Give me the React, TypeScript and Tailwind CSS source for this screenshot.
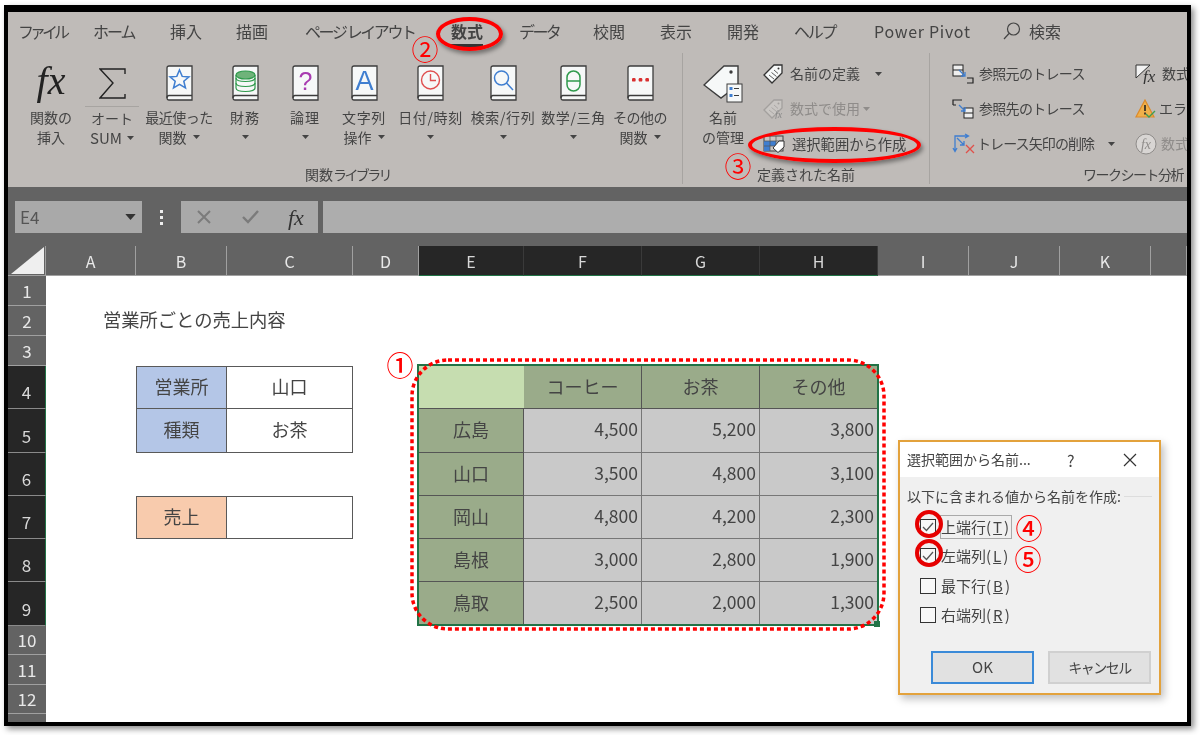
import type { ReactNode } from 'react'

const font = "font-['Noto_Sans_CJK_JP','Noto_Sans',sans-serif]"

const tabs = [
  { label: 'ファイル', w: 'w-[75px]', track: 'tracking-[-4px]' },
  { label: 'ホーム', w: 'w-[77px]', track: 'tracking-[-2px]' },
  { label: '挿入', w: 'w-[66px]', track: '' },
  { label: '描画', w: 'w-[69px]', track: '' },
  { label: 'ページ レイアウト', w: 'w-[146px]', track: 'tracking-[-2.4px]' },
  { label: '数式', w: 'w-[68px]', track: '', active: true },
  { label: 'データ', w: 'w-[74px]', track: 'tracking-[-2.6px]' },
  { label: '校閲', w: 'w-[67px]', track: '' },
  { label: '表示', w: 'w-[67px]', track: '' },
  { label: '開発', w: 'w-[67px]', track: '' },
  { label: 'ヘルプ', w: 'w-[80px]', track: 'tracking-[-2.2px]' },
  { label: 'Power Pivot', w: 'w-[129px]', track: 'tracking-[0.7px]' },
]

function Caret({ className = '' }: { className?: string }) {
  return (
    <svg width="7" height="4" viewBox="0 0 7 4" className={`inline-block ${className}`}>
      <path d="M0 0h7L3.5 4z" fill="currentColor" />
    </svg>
  )
}

function Book({ children }: { children: ReactNode }) {
  return (
    <svg width="27" height="36" viewBox="0 0 27 36">
      <path d="M3 1h23v34H3c-1.2 0-2-.8-2-2V3c0-1.2.8-2 2-2z" fill="#f6f8f8" stroke="#3c3c3c" strokeWidth="1.3" />
      <path d="M1 33c0-1.5.8-2.5 2-2.5h23" fill="none" stroke="#3c3c3c" strokeWidth="1.3" />
      {children}
    </svg>
  )
}

const bookIcons: Record<string, ReactNode> = {
  star: <path d="M13.5 5l2.7 6.4 6.8.5-5.2 4.4 1.7 6.7-6-3.6-6 3.6 1.7-6.7-5.2-4.4 6.8-.5z" fill="none" stroke="#3f7ed0" strokeWidth="1.5" />,
  db: (
    <g fill="#6fb37a" stroke="#2f9a4c" strokeWidth="1.2">
      <path d="M4 18v5c0 2 4 3.5 9.5 3.5S23 25 23 23v-5" fill="none" />
      <path d="M4 13v5c0 2 4 3.5 9.5 3.5S23 20 23 18v-5" fill="none" />
      <path d="M4 13c0 2 4 3.5 9.5 3.5S23 15 23 13" fill="none" />
      <ellipse cx="13.5" cy="10" rx="9.5" ry="4" />
      <path d="M4 10v3M23 10v3" fill="none" />
    </g>
  ),
  question: (
    <text x="13.5" y="25" textAnchor="middle" fontSize="25" fill="#a83bb0" fontFamily="Liberation Sans">?</text>
  ),
  a: (
    <text x="13.5" y="25" textAnchor="middle" fontSize="27" fill="#3f7ed0" fontFamily="Liberation Sans">A</text>
  ),
  clock: (
    <g fill="none" stroke="#df4f4f" strokeWidth="1.4">
      <circle cx="13.5" cy="15" r="9" />
      <path d="M13.5 9v6.5H19" />
    </g>
  ),
  search: (
    <g fill="none" stroke="#3f7ed0" strokeWidth="1.5">
      <circle cx="11.5" cy="13" r="7" />
      <path d="M16.5 18l6.5 7" />
    </g>
  ),
  theta: (
    <g fill="none" stroke="#2f9a4c" strokeWidth="1.5">
      <rect x="7" y="6" width="13" height="20" rx="6.5" />
      <path d="M7 16h13" />
    </g>
  ),
  dots: (
    <g fill="#d92f2f">
      <rect x="5" y="13" width="3.6" height="3.6" rx="1.2" />
      <rect x="11.7" y="13" width="3.6" height="3.6" rx="1.2" />
      <rect x="18.4" y="13" width="3.6" height="3.6" rx="1.2" />
    </g>
  ),
}

const libraryButtons = [
  { w: 'w-[70px]', icon: 'star', lines: ['最近使った', '関数'], track: 'tracking-[-0.5px]' },
  { w: 'w-[62px]', icon: 'db', lines: ['財務', ''], track: 'tracking-[1px]' },
  { w: 'w-[58px]', icon: 'question', lines: ['論理', ''], track: 'tracking-[1px]' },
  { w: 'w-[60px]', icon: 'a', lines: ['文字列', '操作'], track: 'tracking-[0.6px]' },
  { w: 'w-[73px]', icon: 'clock', lines: ['日付/時刻', ''], track: 'tracking-[0.6px]' },
  { w: 'w-[72px]', icon: 'search', lines: ['検索/行列', ''], track: 'tracking-[0.6px]' },
  { w: 'w-[69px]', icon: 'theta', lines: ['数学/三角', ''], track: 'tracking-[0.6px]' },
  { w: 'w-[64px]', icon: 'dots', lines: ['その他の', '関数'], track: 'tracking-[-0.5px]' },
]

function TagIcon() {
  return (
    <svg width="40" height="38" viewBox="0 0 40 38">
      <path d="M1 20L21 1h14v19L18 33z" fill="#f6f8f8" stroke="#3c3c3c" strokeWidth="1.4" />
      <circle cx="28" cy="7" r="1.7" fill="#3c3c3c" />
      <rect x="24" y="19" width="15" height="18" fill="#f6f8f8" stroke="#3c3c3c" />
      <g fill="#3f7ed0">
        <rect x="26.5" y="22" width="3" height="3" />
        <rect x="26.5" y="29" width="3" height="3" />
      </g>
      <path d="M31 23.5h5M31 30.5h5" stroke="#3c3c3c" />
    </svg>
  )
}

function SmallTag({ grey = false }: { grey?: boolean }) {
  const c = grey ? '#a3a09e' : '#333'
  return (
    <svg width="20" height="20" viewBox="0 0 20 20">
      <path d="M1 11L11 1h8v8L9 19z" fill={grey ? '#c9c6c3' : '#f6f8f8'} stroke={c} strokeWidth="1.3" />
      <path d="M6 11l5 4M8.5 8.5l5 4M11 6l4 3.5" stroke={c} strokeWidth="0.8" />
      <circle cx="15.5" cy="4.5" r="1" fill={c} />
      {grey && <text x="12" y="19" fontSize="10" fontStyle="italic" fontFamily="Liberation Serif" fill="#888">fx</text>}
    </svg>
  )
}

function CreateIcon() {
  return (
    <svg width="22" height="18" viewBox="0 0 22 18">
      <rect x="1" y="1" width="19" height="15" fill="#c9c6c3" stroke="#444" />
      <rect x="1" y="6" width="6" height="10" fill="#3f7ed0" />
      <rect x="7" y="6" width="6" height="5" fill="#3f7ed0" />
      <path d="M1 6h19M7 1v15M13 1v15M1 11h12" stroke="#555" strokeWidth="0.7" />
      <path d="M10 13l6-7h5v6l-6 5.5z" fill="#fff" stroke="#333" />
    </svg>
  )
}

function TraceIcon({ kind }: { kind: 'from' | 'to' }) {
  return (
    <svg width="22" height="20" viewBox="0 0 22 20">
      {kind === 'from' ? (
        <>
          <rect x="1" y="1" width="10" height="11" fill="#eee" stroke="#222" />
          <path d="M1 6h10" stroke="#222" />
          <path d="M15 14h6v5h-6" fill="none" stroke="#222" strokeWidth="1.2" />
        </>
      ) : (
        <>
          <path d="M1 6V1h9M1 6h3" fill="none" stroke="#222" strokeWidth="1.2" />
          <rect x="12" y="9" width="9" height="10" fill="#eee" stroke="#222" />
          <path d="M12 14h9" stroke="#222" />
        </>
      )}
      <path d="M7 6l6 6M13 8v4H9" fill="none" stroke="#3f7ed0" strokeWidth="1.3" />
    </svg>
  )
}

function RemoveArrowsIcon() {
  return (
    <svg width="24" height="22" viewBox="0 0 24 22">
      <path d="M3 18V3h13M13 1l3.5 2L13 5M1 15l2 3.5L5 15M5 5l7 7M12 8v4H8" fill="none" stroke="#3f7ed0" strokeWidth="1.3" />
      <path d="M14 12l8 8M22 12l-8 8" stroke="#e0504a" strokeWidth="1.3" />
    </svg>
  )
}

function ShowFormulaIcon() {
  return (
    <svg width="22" height="20" viewBox="0 0 22 20">
      <path d="M1 1h14L1 14z" fill="#f2f2f2" stroke="#333" />
      <text x="8" y="18" fontSize="17" fontStyle="italic" fontFamily="Liberation Serif" fill="#333">fx</text>
    </svg>
  )
}

function ErrorIcon() {
  return (
    <svg width="22" height="20" viewBox="0 0 22 20">
      <path d="M10 1l9 17H1z" fill="#f0b04a" stroke="#dd8a2a" strokeWidth="1.2" />
      <path d="M10 6v6" stroke="#222" strokeWidth="1.6" />
      <path d="M10 13.5v2" stroke="#222" strokeWidth="1.6" />
      <path d="M11 15l3 3 6-6" fill="none" stroke="#3f9d52" strokeWidth="1.4" />
    </svg>
  )
}

function EvalIcon() {
  return (
    <svg width="22" height="22" viewBox="0 0 22 22">
      <circle cx="11" cy="11" r="10" fill="#d8d5d3" stroke="#8f8c8a" />
      <text x="11" y="16" textAnchor="middle" fontSize="14" fontStyle="italic" fontFamily="Liberation Serif" fill="#8f8c8a">fx</text>
    </svg>
  )
}

function SmallRow({ icon, children, className = '' }: { icon: ReactNode; children: ReactNode; className?: string }) {
  return (
    <div className={`flex h-[35px] items-center text-[14px] whitespace-nowrap ${className}`}>
      {icon}
      {children}
    </div>
  )
}

function Ribbon() {
  return (
    <div className="h-[175px] overflow-hidden bg-[#bfbbb8] text-[#444]">
      <div className="mb-[4px] flex h-[37px] items-center pl-[10px] text-[16px]">
        {tabs.map((t) => (
          <div key={t.label} className={`${t.w} ${t.track} shrink-0 whitespace-pre ${t.active ? 'font-bold' : ''}`}>
            {t.active ? <span className="border-b-[3px] border-[#333] pb-[1px]">{t.label}</span> : t.label}
          </div>
        ))}
        <svg width="18" height="18" viewBox="0 0 18 18" className="shrink-0 text-[#444]">
          <circle cx="10.5" cy="7" r="6" fill="none" stroke="currentColor" strokeWidth="1.2" />
          <path d="M6 11.5L1 17" stroke="currentColor" strokeWidth="1.2" />
        </svg>
        <span className="ml-[8px] whitespace-nowrap">検索</span>
      </div>
      <div className="flex h-[131px]">
        {/* 関数ライブラリ */}
        <div className="flex w-[675px] shrink-0 flex-col border-r border-[#a7a4a1] pl-[14px]">
          <div className="flex text-[14px] leading-[20px]">
            <div className="flex w-[58px] flex-col items-center">
              <div className="flex h-[54px] items-start pt-[5px] font-['Liberation_Serif',serif] text-[40px] leading-[46px] text-[#222] italic">fx</div>
              <div>関数の</div>
              <div>挿入</div>
            </div>
            <div className="flex w-[64px] flex-col items-center">
              <div className="flex h-[54px] w-[54px] items-start justify-center border-b border-[#a7a4a1] pt-[15px]">
                <svg width="27" height="31" viewBox="0 0 27 31">
                  <path d="M26 6V1H1l13 14L1 30h25v-4" fill="none" stroke="#222" strokeWidth="1.4" />
                </svg>
              </div>
              <div className="mt-[1px]">オート</div>
              <div className="flex items-center gap-[5px] text-[15px]">SUM<Caret /></div>
            </div>
            {libraryButtons.map((b) => (
              <div key={b.icon} className={`flex ${b.w} flex-col items-center whitespace-nowrap`}>
                <div className="flex h-[54px] items-start pt-[12px]">
                  <Book>{bookIcons[b.icon]}</Book>
                </div>
                <div className={b.track}>{b.lines[0]}</div>
                <div className="flex h-[20px] items-center gap-[6px]">
                  {b.lines[1]}
                  <Caret />
                </div>
              </div>
            ))}
          </div>
          <div className="mt-auto pl-[283px] text-[14px] leading-[20px]">関数<span className="tracking-[-2.6px]">ライブラリ</span></div>
        </div>

        {/* 定義された名前 */}
        <div className="flex w-[247px] shrink-0 flex-col border-r border-[#a7a4a1]">
          <div className="flex">
            <div className="flex w-[80px] flex-col items-center text-[14px] leading-[20px]">
              <div className="flex h-[54px] items-start pt-[12px]"><TagIcon /></div>
              <div>名前</div>
              <div>の管理</div>
            </div>
            <div className="pt-[3px]">
              <SmallRow icon={<SmallTag />}>
                <span className="ml-[7px]">名前の定義</span>
                <Caret className="ml-[15px]" />
              </SmallRow>
              <SmallRow icon={<SmallTag grey />} className="text-[#8f8c8a]">
                <span className="ml-[7px]">数式で使用</span>
                <Caret className="ml-[3px]" />
              </SmallRow>
              <SmallRow icon={<CreateIcon />}>
                <span className="ml-[7px] text-[14.3px]">選択範囲から作成</span>
              </SmallRow>
            </div>
          </div>
          <div className="mt-auto pl-[74px] text-[14px] leading-[20px]">定義された名前</div>
        </div>

        {/* ワークシート分析 */}
        <div className="flex min-w-0 flex-1 flex-col">
          <div className="flex pt-[3px] pl-[22px]">
            <div className="w-[183px] shrink-0">
              <SmallRow icon={<TraceIcon kind="from" />}>
                <span className="ml-[5px] tracking-[-0.7px]">参照元のトレース</span>
              </SmallRow>
              <SmallRow icon={<TraceIcon kind="to" />}>
                <span className="ml-[5px] tracking-[-0.7px]">参照先のトレース</span>
              </SmallRow>
              <SmallRow icon={<RemoveArrowsIcon />}>
                <span className="ml-[1px] tracking-[-0.9px]">トレース矢印の削除</span>
                <Caret className="ml-[14px]" />
              </SmallRow>
            </div>
            <div>
              <SmallRow icon={<ShowFormulaIcon />}>
                <span className="ml-[5px]">数式の表示</span>
              </SmallRow>
              <SmallRow icon={<ErrorIcon />}>
                <span className="ml-[2px]">エラー チェック</span>
              </SmallRow>
              <SmallRow icon={<EvalIcon />} className="text-[#8f8c8a]">
                <span className="ml-[4px]">数式の検証</span>
              </SmallRow>
            </div>
          </div>
          <div className="mt-auto pl-[153px] text-[14px] leading-[20px] tracking-[-1.5px] whitespace-nowrap">ワークシート分析</div>
        </div>
      </div>
    </div>
  )
}

function FormulaBar() {
  return (
    <div className="flex h-[59px] items-start bg-[#636363] pt-[14px] pl-[7px] text-[#555]">
      <div className="flex h-[32px] w-[127px] items-center justify-between bg-[#a9a9a9] pr-[8px] pl-[5px] text-[17px]">
        E4
        <Caret className="scale-150 text-[#333]" />
      </div>
      <div className="flex h-[32px] w-[39px] flex-col items-center justify-center gap-[3px]">
        <span className="size-[3px] bg-[#eee]" />
        <span className="size-[3px] bg-[#eee]" />
        <span className="size-[3px] bg-[#eee]" />
      </div>
      <div className="flex h-[32px] w-[137px] items-center bg-[#a9a9a9] pl-[16px]">
        <svg width="14" height="14" viewBox="0 0 14 14">
          <path d="M1 1l12 12M13 1L1 13" stroke="#7b7b7b" strokeWidth="2" />
        </svg>
        <svg width="18" height="14" viewBox="0 0 18 14" className="ml-[31px]">
          <path d="M1 7l5 5L16 1" fill="none" stroke="#7b7b7b" strokeWidth="2.4" />
        </svg>
        <span className="ml-[28px] font-['Liberation_Serif',serif] text-[22px] text-[#333] italic">fx</span>
      </div>
      <div className="ml-[5px] h-[32px] flex-1 bg-[#adadad]" />
    </div>
  )
}

const columns = ['A', 'B', 'C', 'D', 'E', 'F', 'G', 'H', 'I', 'J', 'K', '']
const selectedCols = ['E', 'F', 'G', 'H']
const rowNumbers = [1, 2, 3, 4, 5, 6, 7, 8, 9, 10, 11, 12, 13]

const head = 'bg-[#9aab8a] justify-center border-r border-b border-[#555]'
const data = 'bg-[#c9c9c9] justify-end pr-[3px] text-[17.5px] border-r border-b border-[#777]'
const left = 'bg-[#9aab8a] justify-center border-r border-b border-[#555]'

const cells: Record<string, { text?: ReactNode; cls: string }> = {
  B4: { text: '営業所', cls: 'bg-[#b4c6e7] justify-center border border-[#595959]' },
  C4: { text: '山口', cls: 'justify-center border-y border-r border-[#595959]' },
  B5: { text: '種類', cls: 'bg-[#b4c6e7] justify-center border-x border-b border-[#595959]' },
  C5: { text: 'お茶', cls: 'justify-center border-r border-b border-[#595959]' },
  B7: { text: '売上', cls: 'bg-[#f8cbad] justify-center border border-[#595959]' },
  C7: { cls: 'border-y border-r border-[#595959]' },
  E4: { cls: 'bg-[#c6ddb0] border-b border-[#555]' },
  F4: { text: 'コーヒー', cls: head },
  G4: { text: 'お茶', cls: head },
  H4: { text: 'その他', cls: head },
  E5: { text: '広島', cls: left },
  F5: { text: '4,500', cls: data },
  G5: { text: '5,200', cls: data },
  H5: { text: '3,800', cls: data },
  E6: { text: '山口', cls: left },
  F6: { text: '3,500', cls: data },
  G6: { text: '4,800', cls: data },
  H6: { text: '3,100', cls: data },
  E7: { text: '岡山', cls: left },
  F7: { text: '4,800', cls: data },
  G7: { text: '4,200', cls: data },
  H7: { text: '2,300', cls: data },
  E8: { text: '島根', cls: left },
  F8: { text: '3,000', cls: data },
  G8: { text: '2,800', cls: data },
  H8: { text: '1,900', cls: data },
  E9: { text: '鳥取', cls: left },
  F9: { text: '2,500', cls: data },
  G9: { text: '2,000', cls: data },
  H9: { text: '1,300', cls: data },
}

function Sheet() {
  return (
    <div className="grid h-[476px] grid-cols-[38px_90px_91px_126px_66px_105px_118px_118px_118px_91px_91px_91px_36px] grid-rows-[30px_30px_30px_30px_43px_44px_43px_43px_43px_44px_29px_30px_29px_8px] overflow-hidden bg-white text-[18px] text-[#444]">
      <div className="flex items-end justify-end border-r border-b border-[#a0a0a0] bg-[#636363] p-[1px]">
        <div className="h-[27px] w-[33px] bg-[#efefef] [clip-path:polygon(100%_0,100%_100%,0_100%)]" />
      </div>
      {columns.map((c, i) => (
        <div
          key={i}
          className={
            selectedCols.includes(c)
              ? 'flex items-center justify-center border-r border-b border-r-[#3a3a3a] border-b-[#217346] bg-[#262626] text-[16px] text-[#d8d8d8]'
              : 'flex items-center justify-center border-b border-[#a0a0a0] bg-[#636363] text-[16px] text-[#e8e8e8] not-last:border-r'
          }
        >
          {c}
        </div>
      ))}
      {rowNumbers.map((r) => (
        <Row key={r} r={r} />
      ))}
    </div>
  )
}

function Row({ r }: { r: number }) {
  const selected = r >= 4 && r <= 9
  return (
    <>
      <div
        className={
          selected
            ? 'flex items-end justify-center border-r border-b border-r-[#217346] border-b-[#8a8a8a] bg-[#262626] pb-[4px] text-[17px] text-[#d8d8d8]'
            : r === 13
              ? 'flex items-start justify-center overflow-hidden bg-[#636363] pt-[5px] text-[16px] leading-[20px] text-[#e8e8e8]'
              : 'flex items-center justify-center border-b border-[#a0a0a0] bg-[#636363] text-[17px] text-[#e8e8e8]'
        }
      >
        {r}
      </div>
      {columns.map((c, i) => {
        const cell = cells[c + r]
        return (
          <div key={i} className={`flex items-center pb-[2px] ${cell ? cell.cls : ''}`}>
            {cell?.text}
          </div>
        )
      })}
    </>
  )
}

function CheckRow({ label, letter, checked, focus }: { label: string; letter: string; checked?: boolean; focus?: boolean }) {
  return (
    <div className="flex h-[29.5px] items-center">
      <div className="flex size-[16px] items-center justify-center border border-[#333] bg-[#f8f8f8]">
        {checked && (
          <svg width="12" height="10" viewBox="0 0 12 10">
            <path d="M1 5l3.5 3.5L11 1" fill="none" stroke="#555" strokeWidth="1.3" />
          </svg>
        )}
      </div>
      <span className={`ml-[4px] text-[15px] whitespace-nowrap ${focus ? 'border border-[#aaa] pr-[2px]' : 'pl-[1px]'}`}>
        {label}(<u className="mx-[2px]">{letter}</u>)
      </span>
    </div>
  )
}

function Dialog() {
  return (
    <div className="absolute top-[440px] left-[898px] flex h-[255px] w-[263px] flex-col border-2 border-[#e3a23c] bg-[#f0f0f0] text-[14px] text-[#444] shadow-[3px_4px_8px_rgba(0,0,0,0.25)]">
      <div className="flex h-[35px] items-center bg-white pl-[7px]">
        <span className="w-[160px]">選択範囲から名前...</span>
        <span className="text-[16px]">?</span>
        <svg width="14" height="14" viewBox="0 0 14 14" className="ml-[48px]">
          <path d="M1 1l12 12M13 1L1 13" stroke="#333" strokeWidth="1.2" />
        </svg>
      </div>
      <div className="flex items-center pt-[9px] pl-[7px]">
        以下に含まれる値から名前を作成:
        <div className="ml-[3px] h-px w-[28px] bg-[#ddd]" />
      </div>
      <div className="pt-[5px] pl-[20px]">
        <CheckRow label="上端行" letter="T" checked focus />
        <CheckRow label="左端列" letter="L" checked />
        <CheckRow label="最下行" letter="B" />
        <CheckRow label="右端列" letter="R" />
      </div>
      <div className="mt-auto mb-[9px] flex justify-end gap-[14px] pr-[8px]">
        <div className="flex h-[33px] w-[103px] items-center justify-center border-2 border-[#3a8ad8] bg-[#e1e1e1] text-[15px]">OK</div>
        <div className="flex h-[33px] w-[103px] items-center justify-center border-2 border-[#d0d0d0] bg-[#e1e1e1] tracking-[-1.5px]">キャンセル</div>
      </div>
    </div>
  )
}

function Num({ className, children }: { className: string; children: string }) {
  return (
    <div className={`absolute flex size-[30px] items-center justify-center text-[27px] leading-none text-[#f00] ${className}`}>
      {children}
    </div>
  )
}

export default function App() {
  return (
    <div className={`relative h-[735px] w-[1200px] overflow-hidden bg-white pt-[5px] pl-[4px] blur-[0.35px] ${font}`}>
      <div className="h-[721px] w-[1187px] overflow-hidden border-x-4 border-t-[7px] border-b-4 border-black shadow-[3px_3px_6px_rgba(0,0,0,0.45)]">
        <Ribbon />
        <FormulaBar />
        <Sheet />
      </div>

      <div className="absolute top-[309px] left-[103px] text-[18.3px] leading-[20px] text-[#444]">営業所ごとの売上内容</div>

      {/* selection */}
      <div className="absolute top-[364px] left-[417px] h-[262px] w-[462px] border-2 border-[#217346]" />
      <div className="absolute top-[621px] left-[874px] size-[6px] bg-[#217346]" />

      {/* annotations */}
      <svg width="480" height="276" viewBox="0 0 480 276" className="absolute top-[357px] left-[408px]">
        <rect x="4" y="3" width="472" height="269" rx="36" fill="none" stroke="#f00" strokeWidth="3.5" strokeDasharray="4 3" />
      </svg>
      <div className="absolute top-[17px] left-[436px] h-[34px] w-[67px] rounded-[50%] border-4 border-[#f00] shadow-[2px_3px_4px_rgba(0,0,0,0.4)]" />
      <div className="absolute top-[127px] left-[748px] h-[36px] w-[173px] rounded-[50%] border-4 border-[#f00] shadow-[2px_3px_4px_rgba(0,0,0,0.4)]" />
      <Num className="top-[349px] left-[385px] font-medium">①</Num>
      <Num className="top-[33px] left-[410px]">②</Num>
      <Num className="top-[150px] left-[723px]">③</Num>

      <Dialog />
      <div className="absolute top-[510px] left-[915px] h-[28px] w-[28px] rounded-full border-4 border-[#e60000]" />
      <div className="absolute top-[539px] left-[915px] h-[28px] w-[28px] rounded-full border-4 border-[#e60000]" />
      <Num className="top-[512px] left-[1014px] font-medium">④</Num>
      <Num className="top-[543px] left-[1013px] font-medium">⑤</Num>
    </div>
  )
}
